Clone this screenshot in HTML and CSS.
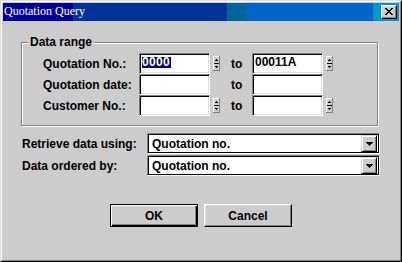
FILE: index.html
```html
<!DOCTYPE html>
<html>
<head>
<meta charset="utf-8">
<link rel="stylesheet" href="styles.css">
</head>
<body>
<div class="window">
  <div class="frame">
    <div class="titlebar">
      <span class="title">Quotation Query</span>
      <span class="close">
        <svg width="8" height="7" viewBox="0 0 8 7" shape-rendering="crispEdges">
          <path d="M0 0h2v1h-2zM6 0h2v1h-2zM1 1h2v1h-2zM5 1h2v1h-2zM2 2h4v1h-4zM3 3h2v1h-2zM2 4h4v1h-4zM1 5h2v1h-2zM5 5h2v1h-2zM0 6h2v1h-2zM6 6h2v1h-2z" fill="#000"/>
        </svg>
      </span>
    </div>
    <div class="content">
      <div class="group">
        <span class="legend">Data range</span>
        <div class="range">
          <span class="label">Quotation No.:</span>
          <div class="field"><span class="sel">0000</span></div>
          <span class="spin"><svg width="7" height="15" viewBox="0 0 7 15" shape-rendering="crispEdges"><rect width="7" height="15" fill="#ccc"/><path d="M0 0h6v1h-5v13h-1z" fill="#fff"/><path d="M6 0h1v15h-7v-1h6z" fill="#808080"/><path d="M3 3h1v1h-1zM2 4h3v1h-3zM1 7h5v1h-5zM2 10h3v1h-3zM3 11h1v1h-1z" fill="#000"/></svg></span>
          <span class="to">to</span>
          <div class="field">00011A</div>
          <span class="spin"><svg width="7" height="15" viewBox="0 0 7 15" shape-rendering="crispEdges"><rect width="7" height="15" fill="#ccc"/><path d="M0 0h6v1h-5v13h-1z" fill="#fff"/><path d="M6 0h1v15h-7v-1h6z" fill="#808080"/><path d="M3 3h1v1h-1zM2 4h3v1h-3zM1 7h5v1h-5zM2 10h3v1h-3zM3 11h1v1h-1z" fill="#000"/></svg></span>

          <span class="label">Quotation date:</span>
          <div class="field"></div>
          <span class="nospin"></span>
          <span class="to">to</span>
          <div class="field"></div>
          <span class="nospin"></span>

          <span class="label">Customer No.:</span>
          <div class="field"></div>
          <span class="spin"><svg width="7" height="15" viewBox="0 0 7 15" shape-rendering="crispEdges"><rect width="7" height="15" fill="#ccc"/><path d="M0 0h6v1h-5v13h-1z" fill="#fff"/><path d="M6 0h1v15h-7v-1h6z" fill="#808080"/><path d="M3 3h1v1h-1zM2 4h3v1h-3zM1 7h5v1h-5zM2 10h3v1h-3zM3 11h1v1h-1z" fill="#000"/></svg></span>
          <span class="to">to</span>
          <div class="field"></div>
          <span class="spin"><svg width="7" height="15" viewBox="0 0 7 15" shape-rendering="crispEdges"><rect width="7" height="15" fill="#ccc"/><path d="M0 0h6v1h-5v13h-1z" fill="#fff"/><path d="M6 0h1v15h-7v-1h6z" fill="#808080"/><path d="M3 3h1v1h-1zM2 4h3v1h-3zM1 7h5v1h-5zM2 10h3v1h-3zM3 11h1v1h-1z" fill="#000"/></svg></span>
        </div>
      </div>

      <div class="options">
        <span class="label">Retrieve data using:</span>
        <div class="combo">
          <span class="combo-text">Quotation no.</span>
          <span class="drop"><svg width="7" height="4" viewBox="0 0 7 4" shape-rendering="crispEdges"><path d="M0 0h7v1h-7zM1 1h5v1h-5zM2 2h3v1h-3zM3 3h1v1h-1z" fill="#000"/></svg></span>
        </div>
        <span class="label">Data ordered by:</span>
        <div class="combo">
          <span class="combo-text">Quotation no.</span>
          <span class="drop"><svg width="7" height="4" viewBox="0 0 7 4" shape-rendering="crispEdges"><path d="M0 0h7v1h-7zM1 1h5v1h-5zM2 2h3v1h-3zM3 3h1v1h-1z" fill="#000"/></svg></span>
        </div>
      </div>

      <div class="buttons">
        <button class="btn default">OK</button>
        <button class="btn">Cancel</button>
      </div>
    </div>
  </div>
</div>
</body>
</html>
```

FILE: styles.css
```css
* { box-sizing: border-box; }

html, body {
  margin: 0;
  padding: 0;
  background: #cccccc;
}

body {
  font-family: "Liberation Sans", Arial, sans-serif;
  font-size: 12px;
  font-weight: bold;
  color: #000;
}

.window {
  width: 402px;
  height: 262px;
  border: 1px solid;
  border-color: #dfdfdf #000 #000 #dfdfdf;
  background: #cccccc;
}

.frame {
  height: 100%;
  border: 1px solid;
  border-color: #fff #808080 #808080 #fff;
  padding: 1px;
  display: flex;
  flex-direction: column;
}

.titlebar {
  height: 18px;
  flex: none;
  display: flex;
  align-items: center;
  background: linear-gradient(to right,
    #000099 0 70px,
    #003399 70px 224px,
    #006699 224px 244px,
    #0066cc 244px 370px,
    #0099cc 370px 100%);
}

.title {
  font-family: "Liberation Serif", "Times New Roman", serif;
  font-weight: normal;
  font-size: 12px;
  color: #fff;
  padding-left: 1px;
  margin-bottom: 2px;
  white-space: nowrap;
}

.close {
  margin-left: auto;
  margin-right: 2px;
  width: 16px;
  height: 14px;
  display: flex;
  align-items: flex-start;
  justify-content: center;
  padding-top: 2px;
  background: #cccccc;
  border: 1px solid;
  border-color: #fff #000 #000 #fff;
  box-shadow: inset -1px -1px 0 #808080, inset 1px 1px 0 #dfdfdf;
}

.close svg { display: block; }

.content {
  flex: 1;
  display: flex;
  flex-direction: column;
}

.group {
  position: relative;
  margin: 21px 0 0 18px;
  width: 357px;
  border: 1px solid #808080;
  box-shadow: inset 1px 1px 0 #fff, 1px 1px 0 #fff;
  padding: 10px 0 9px 21px;
}

.legend {
  position: absolute;
  top: -8px;
  left: 6px;
  padding: 0 2px;
  line-height: 14px;
  background: #cccccc;
}

.range {
  display: grid;
  grid-template-columns: 96px 71px 10px 32px 71px 10px;
  grid-auto-rows: 21px;
  align-items: center;
}

.label { white-space: nowrap; }

.field {
  height: 21px;
  background: #fff;
  border: 1px solid;
  border-color: #808080 #fff #fff #808080;
  box-shadow: inset 1px 1px 0 #000, inset -1px -1px 0 #dfdfdf;
  padding: 1px 1px 4px 2px;
  display: flex;
  align-items: center;
  white-space: nowrap;
  overflow: hidden;
}

.sel {
  display: inline-block;
  height: 11px;
  line-height: 11px;
  padding-right: 1px;
  background: #000080;
  color: #fff;
  letter-spacing: 0.3px;
  white-space: nowrap;
}

.spin {
  justify-self: end;
  width: 7px;
  height: 15px;
}

.spin svg { display: block; }

.to { padding-left: 11px; }

.options {
  margin: 7px 0 0 19px;
  display: grid;
  grid-template-columns: 125px 233px;
  grid-auto-rows: 21px;
  row-gap: 1px;
  align-items: center;
}

.combo {
  height: 21px;
  background: #fff;
  border: 1px solid;
  border-color: #808080 #fff #fff #808080;
  box-shadow: inset 0 0 0 1px #000;
  padding: 1px 2px 1px 4px;
  display: flex;
  align-items: center;
}

.combo-text { flex: 1; }

.drop {
  width: 16px;
  height: 17px;
  align-self: flex-start;
  display: flex;
  align-items: center;
  justify-content: center;
  background: #cccccc;
  border: 1px solid;
  border-color: #dfdfdf #000 #000 #dfdfdf;
  box-shadow: inset 1px 1px 0 #fff, inset -1px -1px 0 #808080;
}

.drop svg { display: block; }

.buttons {
  margin-top: 28px;
  display: flex;
  justify-content: center;
  gap: 6px;
}

.btn {
  width: 88px;
  height: 23px;
  font-family: "Liberation Sans", Arial, sans-serif;
  font-size: 12px;
  font-weight: bold;
  color: #000;
  background: #cccccc;
  border: 1px solid;
  border-color: #fff #000 #000 #fff;
  box-shadow: inset -1px -1px 0 #808080, inset 1px 1px 0 #dfdfdf;
  padding: 0;
  margin: 0;
}

.btn.default {
  border: 1px solid #000;
  box-shadow: inset 1px 1px 0 #fff, inset -1px -1px 0 #000, inset -2px -2px 0 #808080;
}
```
